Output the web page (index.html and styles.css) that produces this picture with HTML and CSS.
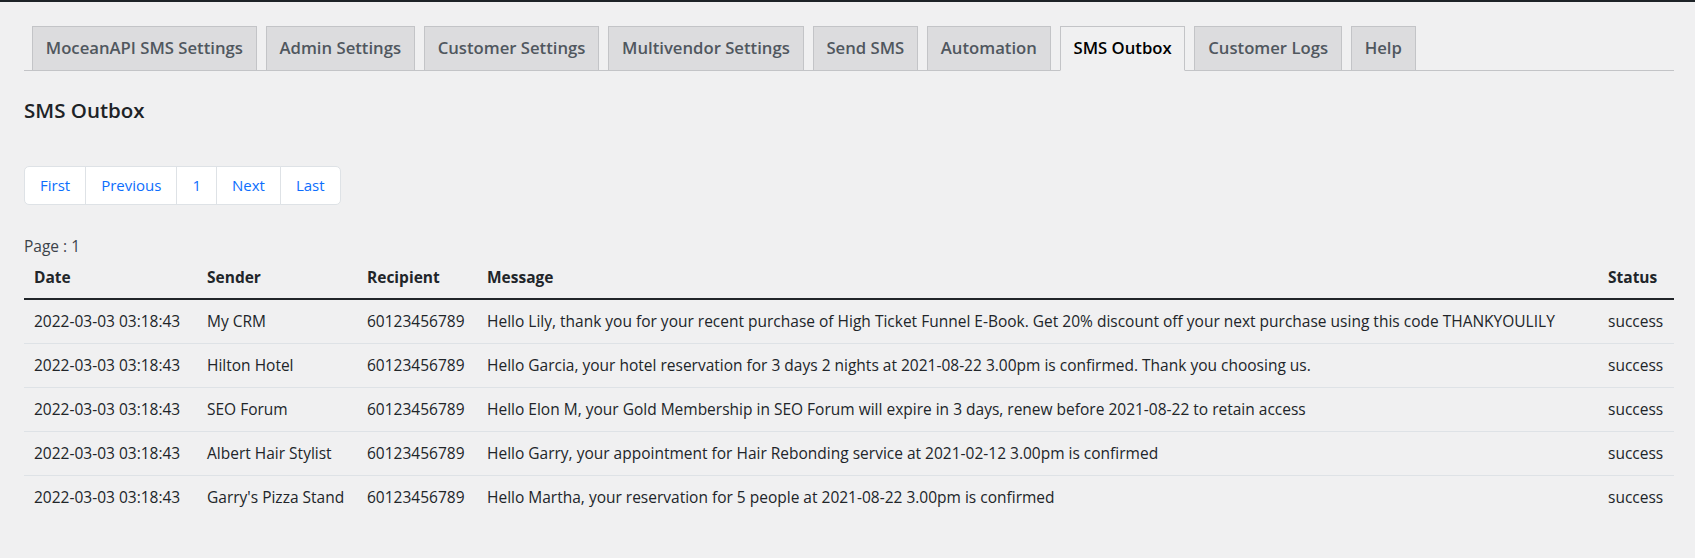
FILE: index.html
```html
<!DOCTYPE html>
<html lang="en">
<head>
<meta charset="utf-8">
<title>SMS Outbox</title>
<link rel="stylesheet" href="styles.css">
</head>
<body>
<div class="adminbar"></div>
<div class="wrap">
  <nav class="tabs">
    <a class="tab">MoceanAPI SMS Settings</a>
    <a class="tab">Admin Settings</a>
    <a class="tab">Customer Settings</a>
    <a class="tab">Multivendor Settings</a>
    <a class="tab">Send SMS</a>
    <a class="tab">Automation</a>
    <a class="tab tab-active">SMS Outbox</a>
    <a class="tab">Customer Logs</a>
    <a class="tab">Help</a>
  </nav>

  <h2 class="title">SMS Outbox</h2>

  <ul class="pagination">
    <li class="page-item"><a class="page-link">First</a></li>
    <li class="page-item"><a class="page-link">Previous</a></li>
    <li class="page-item"><a class="page-link">1</a></li>
    <li class="page-item"><a class="page-link">Next</a></li>
    <li class="page-item"><a class="page-link">Last</a></li>
  </ul>

  <p class="page-label">Page : 1</p>

  <table class="outbox">
    <thead>
      <tr>
        <th class="col-date">Date</th>
        <th class="col-sender">Sender</th>
        <th class="col-recipient">Recipient</th>
        <th class="col-message">Message</th>
        <th class="col-status">Status</th>
      </tr>
    </thead>
    <tbody>
      <tr>
        <td>2022-03-03 03:18:43</td>
        <td>My CRM</td>
        <td>60123456789</td>
        <td>Hello Lily, thank you for your recent purchase of High Ticket Funnel E-Book. Get 20% discount off your next purchase using this code THANKYOULILY</td>
        <td>success</td>
      </tr>
      <tr>
        <td>2022-03-03 03:18:43</td>
        <td>Hilton Hotel</td>
        <td>60123456789</td>
        <td>Hello Garcia, your hotel reservation for 3 days 2 nights at 2021-08-22 3.00pm is confirmed. Thank you choosing us.</td>
        <td>success</td>
      </tr>
      <tr>
        <td>2022-03-03 03:18:43</td>
        <td>SEO Forum</td>
        <td>60123456789</td>
        <td>Hello Elon M, your Gold Membership in SEO Forum will expire in 3 days, renew before 2021-08-22 to retain access</td>
        <td>success</td>
      </tr>
      <tr>
        <td>2022-03-03 03:18:43</td>
        <td>Albert Hair Stylist</td>
        <td>60123456789</td>
        <td>Hello Garry, your appointment for Hair Rebonding service at 2021-02-12 3.00pm is confirmed</td>
        <td>success</td>
      </tr>
      <tr>
        <td>2022-03-03 03:18:43</td>
        <td>Garry's Pizza Stand</td>
        <td>60123456789</td>
        <td>Hello Martha, your reservation for 5 people at 2021-08-22 3.00pm is confirmed</td>
        <td>success</td>
      </tr>
    </tbody>
  </table>
</div>
</body>
</html>
```

FILE: styles.css
```css
* { box-sizing: border-box; }

html, body {
  margin: 0;
  padding: 0;
  background: #f0f0f1;
}

body {
  font-family: "Open Sans", "Noto Sans", "Liberation Sans", sans-serif;
  color: #3c434a;
  font-size: 14px;
}

.adminbar {
  height: 2px;
  background: #1d2327;
}

.wrap {
  padding: 0 21px 0 24px;
}

/* Tabs */
.tabs {
  display: flex;
  align-items: flex-end;
  gap: 9px;
  margin-top: 24px;
  padding-left: 8px;
  border-bottom: 1px solid #c3c4c7;
}

.tab {
  display: block;
  margin-bottom: -1px;
  padding: 9px 12.8px 10px;
  font-size: 16.7px;
  line-height: 24px;
  font-weight: 600;
  color: #50575e;
  background: #dcdcde;
  border: 1px solid #c3c4c7;
  white-space: nowrap;
}

.tab-active {
  background: #f0f0f1;
  color: #000;
  border-bottom-color: #f0f0f1;
}

/* Heading */
.title {
  margin: 25px 0 0;
  font-size: 20.5px;
  line-height: 28px;
  font-weight: 600;
  color: #1d2327;
}

/* Pagination */
.pagination {
  display: flex;
  list-style: none;
  margin: 42px 0 0;
  padding: 0;
}

.page-link {
  display: block;
  padding: 7px 15px;
  font-size: 15px;
  line-height: 23px;
  color: #0d6efd;
  background: #fff;
  border: 1px solid #dee2e6;
  margin-left: -1px;
}

.page-item:first-child .page-link {
  margin-left: 0;
  border-radius: 5px 0 0 5px;
}

.page-item:last-child .page-link {
  border-radius: 0 5px 5px 0;
}

/* Page label */
.page-label {
  margin: 30px 0 0;
  font-size: 15.5px;
  line-height: 22px;
  color: #3c434a;
}

/* Table */
.outbox {
  width: 100%;
  table-layout: fixed;
  border-collapse: collapse;
  color: #212529;
  font-size: 15.5px;
}

.outbox th,
.outbox td {
  padding: 10px 10px;
  line-height: 23px;
  text-align: left;
  white-space: nowrap;
  vertical-align: middle;
}

.outbox th {
  padding: 9px 10px 9px;
  font-weight: 700;
  border-bottom: 2px solid #212529;
}

.outbox td {
  border-bottom: 1px solid #dee2e6;
}

.outbox tbody tr:last-child td {
  border-bottom: 0;
}

.col-date { width: 173px; }
.col-sender { width: 160px; }
.col-recipient { width: 120px; }
.col-message { width: 1121px; }
.col-status { width: 76px; }
```
